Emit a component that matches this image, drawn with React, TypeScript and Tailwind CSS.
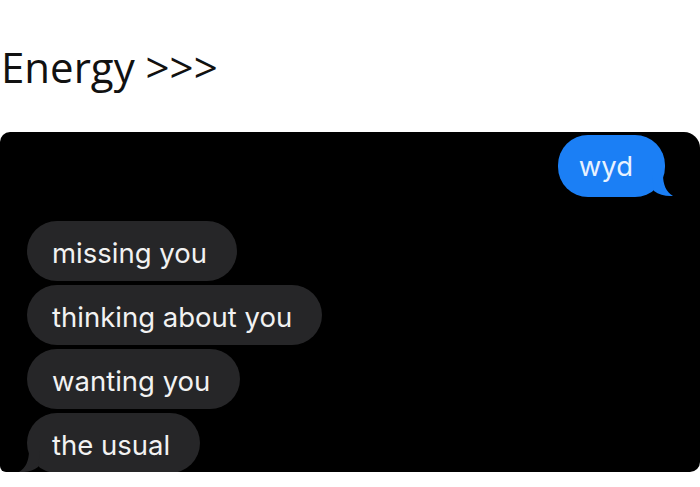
import React from "react";

const grayMessages = ["missing you", "thinking about you", "wanting you", "the usual"];

function Tail({ color, flip }: { color: string; flip?: boolean }) {
  return (
    <svg
      width="22"
      height="22"
      viewBox="0 0 22 22"
      className={flip ? "absolute -left-[9px] bottom-0 -scale-x-100" : "absolute -right-[9px] bottom-0"}
    >
      <path d="M0 0 L11 0 C11 9 14 17 21 21 C14 21.5 7 20 2 16 Z" fill={color} />
    </svg>
  );
}

export default function App() {
  return (
    <div className="w-[700px] h-[487px] bg-white overflow-hidden flex flex-col" style={{ fontFamily: "Inter, 'Liberation Sans', sans-serif" }}>
      <div
        className="pt-[46px] pb-[44px] pl-[1px] text-[42px] leading-none text-[#111111]"
        style={{ fontFamily: "'Open Sans', sans-serif" }}
      >
        Energy &gt;&gt;&gt;
      </div>
      <div className="h-[340px] w-[700px] bg-black rounded-tl-[10px] rounded-tr-[16px] rounded-br-[10px] rounded-bl-[6px] overflow-hidden flex flex-col pt-[3px]">
        <div className="self-end mr-[35px] relative">
          <div className="h-[62px] bg-[#1b7ff5] rounded-[30px] pl-[21px] pr-[32px] pt-[2px] flex items-center text-[27.5px] text-[#e8f2ff]">
            wyd
          </div>
          <Tail color="#1b7ff5" />
        </div>
        <div className="flex flex-col items-start gap-[4px] ml-[27px] mt-[24px]">
          {grayMessages.map((m, i) => (
            <div key={m} className="relative">
              <div className="h-[60px] bg-[#262628] rounded-[30px] pl-[25px] pr-[30px] pt-[6px] flex items-center text-[27.5px] text-[#f2f2f2]">
                {m}
              </div>
              {i === grayMessages.length - 1 && <Tail color="#262628" flip />}
            </div>
          ))}
        </div>
      </div>
    </div>
  );
}
